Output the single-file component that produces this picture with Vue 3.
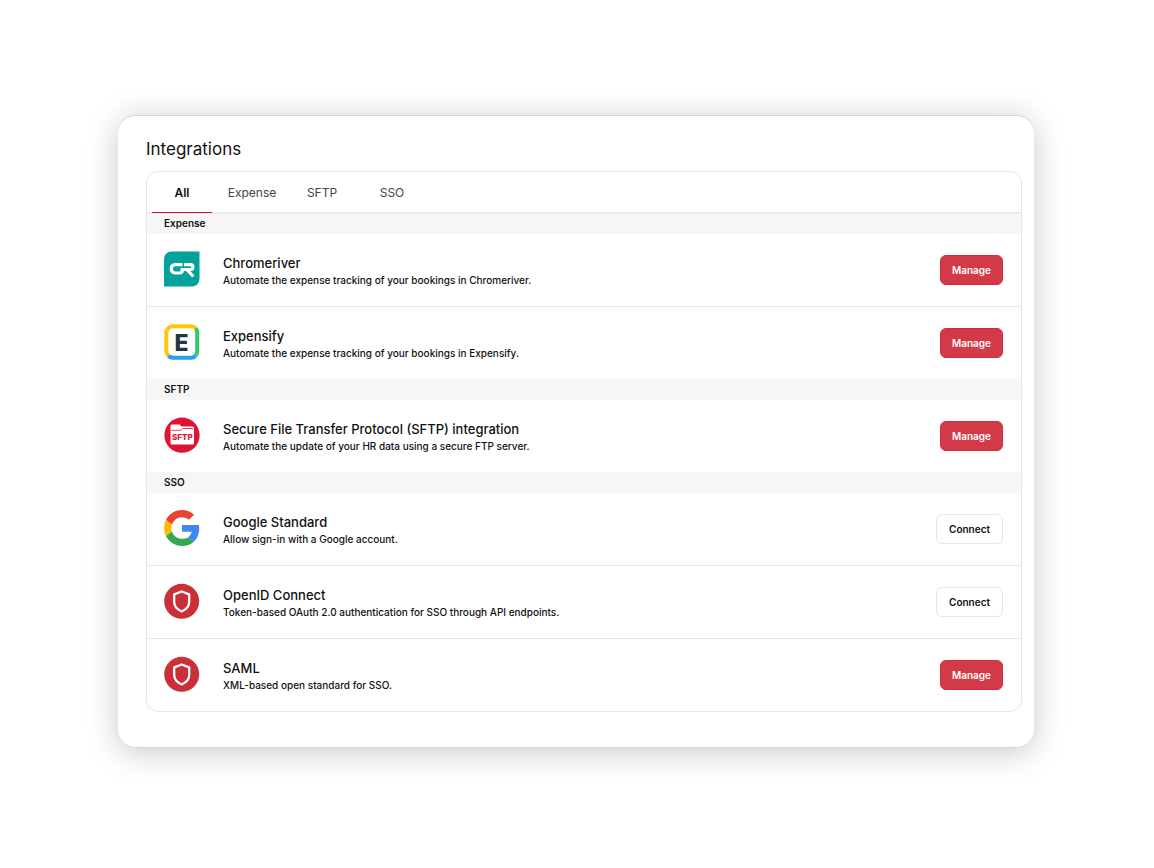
<template>
  <main class="page">
    <section class="card">
      <h1 class="card-title">Integrations</h1>
      <div class="panel">
        <nav class="tabs" aria-label="Integration types">
          <button
            v-for="tab in tabs"
            :key="tab"
            type="button"
            class="tab"
            :class="{ active: tab === activeTab }"
            @click="activeTab = tab"
          >
            {{ tab }}
          </button>
        </nav>
        <section v-for="group in visibleGroups" :key="group.name">
          <h2 class="group-title">{{ group.name }}</h2>
          <ul class="list">
            <li v-for="item in group.items" :key="item.name" class="row">
              <svg v-if="item.icon === 'chromeriver'" class="logo" viewBox="0 0 36 36" aria-hidden="true">
                <path d="M8 .5H35.500V28A7.500 7.500 0 0 1 28 35.500H0V8A7.500 7.500 0 0 1 8 .5Z" fill="#03a29b" />
                <g fill="none" stroke="#fff" stroke-width="3.200">
                  <path d="M18.500 13.700H10.800A4.200 4.200 0 0 0 10.800 22H15.500C17.500 22 18.200 21.300 18.200 19.800V18.500H26.500A2.400 2.400 0 0 0 26.500 13.700H20" />
                  <path d="M22.800 18.500L29.300 25.500" />
                </g>
              </svg>
              <svg v-else-if="item.icon === 'expensify'" class="logo" viewBox="0 0 36 36" aria-hidden="true">
                <rect x="2" y="2" width="32" height="32" rx="7" fill="#fff" />
                <g fill="none" stroke-width="4">
                  <path d="M4.300 31.700A7 7 0 0 1 2.300 27V9A6.700 6.700 0 0 1 9 2.300H27A7 7 0 0 1 31.700 4.300" stroke="#ffc60a" />
                  <path d="M31.700 4.300A7 7 0 0 1 33.200 9V27A7 7 0 0 1 31.700 31.700" stroke="#2ecb70" />
                  <path d="M31.700 31.700A7 7 0 0 1 27 33.700H9A7 7 0 0 1 4.300 31.700" stroke="#2b9fe6" />
                </g>
                <text class="logo-letter" x="17.500" y="26.500" text-anchor="middle">E</text>
              </svg>
              <svg v-else-if="item.icon === 'sftp'" class="logo" viewBox="0 0 36 36" aria-hidden="true">
                <circle cx="18" cy="18.200" r="17.600" fill="#de1433" />
                <path d="M6.500 26V9A1.500 1.500 0 0 1 8 7.500H15.500L17.500 9.500H28.500A1.500 1.500 0 0 1 30 11V26A1.500 1.500 0 0 1 28.500 27.500H8A1.500 1.500 0 0 1 6.500 26Z" fill="#fff" />
                <path d="M7.500 13.300H16.500L18.500 11.500H29" fill="none" stroke="#de1433" stroke-width="0.800" />
                <text class="logo-word" x="18.300" y="23.300" text-anchor="middle">SFTP</text>
              </svg>
              <svg v-else-if="item.icon === 'google'" class="logo" viewBox="0 0 48 48" aria-hidden="true">
                <path fill="#EA4335" d="M24 9.500c3.540 0 6.710 1.220 9.210 3.600l6.850-6.850C35.900 2.380 30.470 0 24 0 14.620 0 6.510 5.380 2.560 13.220l7.980 6.190C12.430 13.720 17.740 9.500 24 9.500z" />
                <path fill="#4285F4" d="M46.980 24.550c0-1.570-.15-3.090-.38-4.550H24v9.020h12.940c-.58 2.960-2.260 5.480-4.780 7.180l7.730 6c4.510-4.180 7.090-10.360 7.090-17.650z" />
                <path fill="#FBBC05" d="M10.530 28.590c-.48-1.450-.76-2.990-.76-4.590s.27-3.140.76-4.590l-7.980-6.190C.92 16.460 0 20.120 0 24c0 3.880.92 7.540 2.560 10.780l7.970-6.190z" />
                <path fill="#34A853" d="M24 48c6.480 0 11.930-2.130 15.890-5.810l-7.730-6c-2.150 1.450-4.920 2.300-8.160 2.300-6.260 0-11.570-4.220-13.470-9.910l-7.980 6.190C6.510 42.620 14.620 48 24 48z" />
              </svg>
              <svg v-else class="logo" viewBox="0 0 36 36" aria-hidden="true">
                <circle cx="17.700" cy="18.300" r="17.500" fill="#cb3038" />
                <path d="M17.700 8.500L25.200 11.300V19C25.200 23.300 22.500 26.300 17.700 28.500C12.900 26.300 10.200 23.300 10.200 19V11.300Z" fill="none" stroke="#fff" stroke-width="2.300" stroke-linejoin="round" />
              </svg>
              <div class="info">
                <h3 class="name">{{ item.name }}</h3>
                <p class="description">{{ item.description }}</p>
              </div>
              <button type="button" class="btn" :class="{ primary: item.connected }">
                {{ item.connected ? 'Manage' : 'Connect' }}
              </button>
            </li>
          </ul>
        </section>
      </div>
    </section>
  </main>
</template>

<script setup>
import { ref, computed } from 'vue'

const tabs = ['All', 'Expense', 'SFTP', 'SSO']
const activeTab = ref('All')

const groups = [
  {
    name: 'Expense',
    items: [
      {
        name: 'Chromeriver',
        description: 'Automate the expense tracking of your bookings in Chromeriver.',
        icon: 'chromeriver',
        connected: true
      },
      {
        name: 'Expensify',
        description: 'Automate the expense tracking of your bookings in Expensify.',
        icon: 'expensify',
        connected: true
      }
    ]
  },
  {
    name: 'SFTP',
    items: [
      {
        name: 'Secure File Transfer Protocol (SFTP) integration',
        description: 'Automate the update of your HR data using a secure FTP server.',
        icon: 'sftp',
        connected: true
      }
    ]
  },
  {
    name: 'SSO',
    items: [
      {
        name: 'Google Standard',
        description: 'Allow sign-in with a Google account.',
        icon: 'google',
        connected: false
      },
      {
        name: 'OpenID Connect',
        description: 'Token-based OAuth 2.0 authentication for SSO through API endpoints.',
        icon: 'shield',
        connected: false
      },
      {
        name: 'SAML',
        description: 'XML-based open standard for SSO.',
        icon: 'shield',
        connected: true
      }
    ]
  }
]

const visibleGroups = computed(() =>
  activeTab.value === 'All' ? groups : groups.filter((g) => g.name === activeTab.value)
)
</script>

<style>
body {
  margin: 0;
  background: #fff;
}
</style>

<style scoped>
.page {
  padding: 115px 120px 120px 118px;
  font-family: Inter, 'Liberation Sans', sans-serif;
  color: #111;
}

.card {
  padding: 21px 12px 35px 28px;
  border: 1px solid #d8d8d8;
  border-width: 1px 0;
  border-radius: 18px;
  background: #fff;
  box-shadow: 0 4px 32px rgba(0, 0, 0, 0.22);
}

.card-title {
  margin: 0 0 10px;
  font-size: 17px;
  line-height: 24px;
  font-weight: 400;
}

.panel {
  border: 1px solid #e6e6e6;
  border-radius: 12px;
  overflow: hidden;
}

.tabs {
  position: relative;
  display: flex;
  gap: 10px;
  padding: 0 5px;
  box-shadow: inset 0 -1px #ebebeb, 0 1px #ebebeb;
}

.tab {
  width: 60px;
  height: 41px;
  padding: 0;
  border: none;
  background: none;
  font-family: inherit;
  font-size: 12px;
  color: #444;
  cursor: pointer;
}

.tab.active {
  box-shadow: inset 0 -1px #d9142f;
  font-weight: 600;
  color: #111;
}

.group-title {
  margin: 0;
  padding: 0 17px;
  background: #f6f6f6;
  font-size: 10px;
  line-height: 21px;
  font-weight: 600;
}

.list {
  margin: 0;
  padding: 0;
  list-style: none;
}

.row {
  display: flex;
  align-items: center;
  min-height: 38px;
  padding: 17px 18px 17px 17px;
}

.row + .row {
  border-top: 1px solid #e6e6e6;
}

.logo {
  flex: none;
  align-self: flex-start;
  width: 36px;
  height: 36px;
  margin-right: 23px;
}

.logo-letter {
  font-size: 23px;
  font-weight: 800;
  fill: #243440;
}

.logo-word {
  font-size: 8px;
  font-weight: 800;
  fill: #de1433;
}

.info {
  flex: 1;
  padding-top: 4px;
}

.name {
  margin: 0;
  font-size: 13px;
  line-height: 17px;
  font-weight: 500;
}

.description {
  margin: 0;
  font-size: 10px;
  line-height: 17px;
  font-weight: 500;
}

.btn {
  height: 30px;
  padding: 0 12px;
  border: 1px solid #e6e6e6;
  border-radius: 6px;
  background: #fff;
  font-family: inherit;
  font-size: 10px;
  font-weight: 600;
  color: #111;
  cursor: pointer;
}

.btn.primary {
  padding: 0 11px;
  border-color: #cf2c3d;
  background: #d33a48;
  color: #fff;
}
</style>
